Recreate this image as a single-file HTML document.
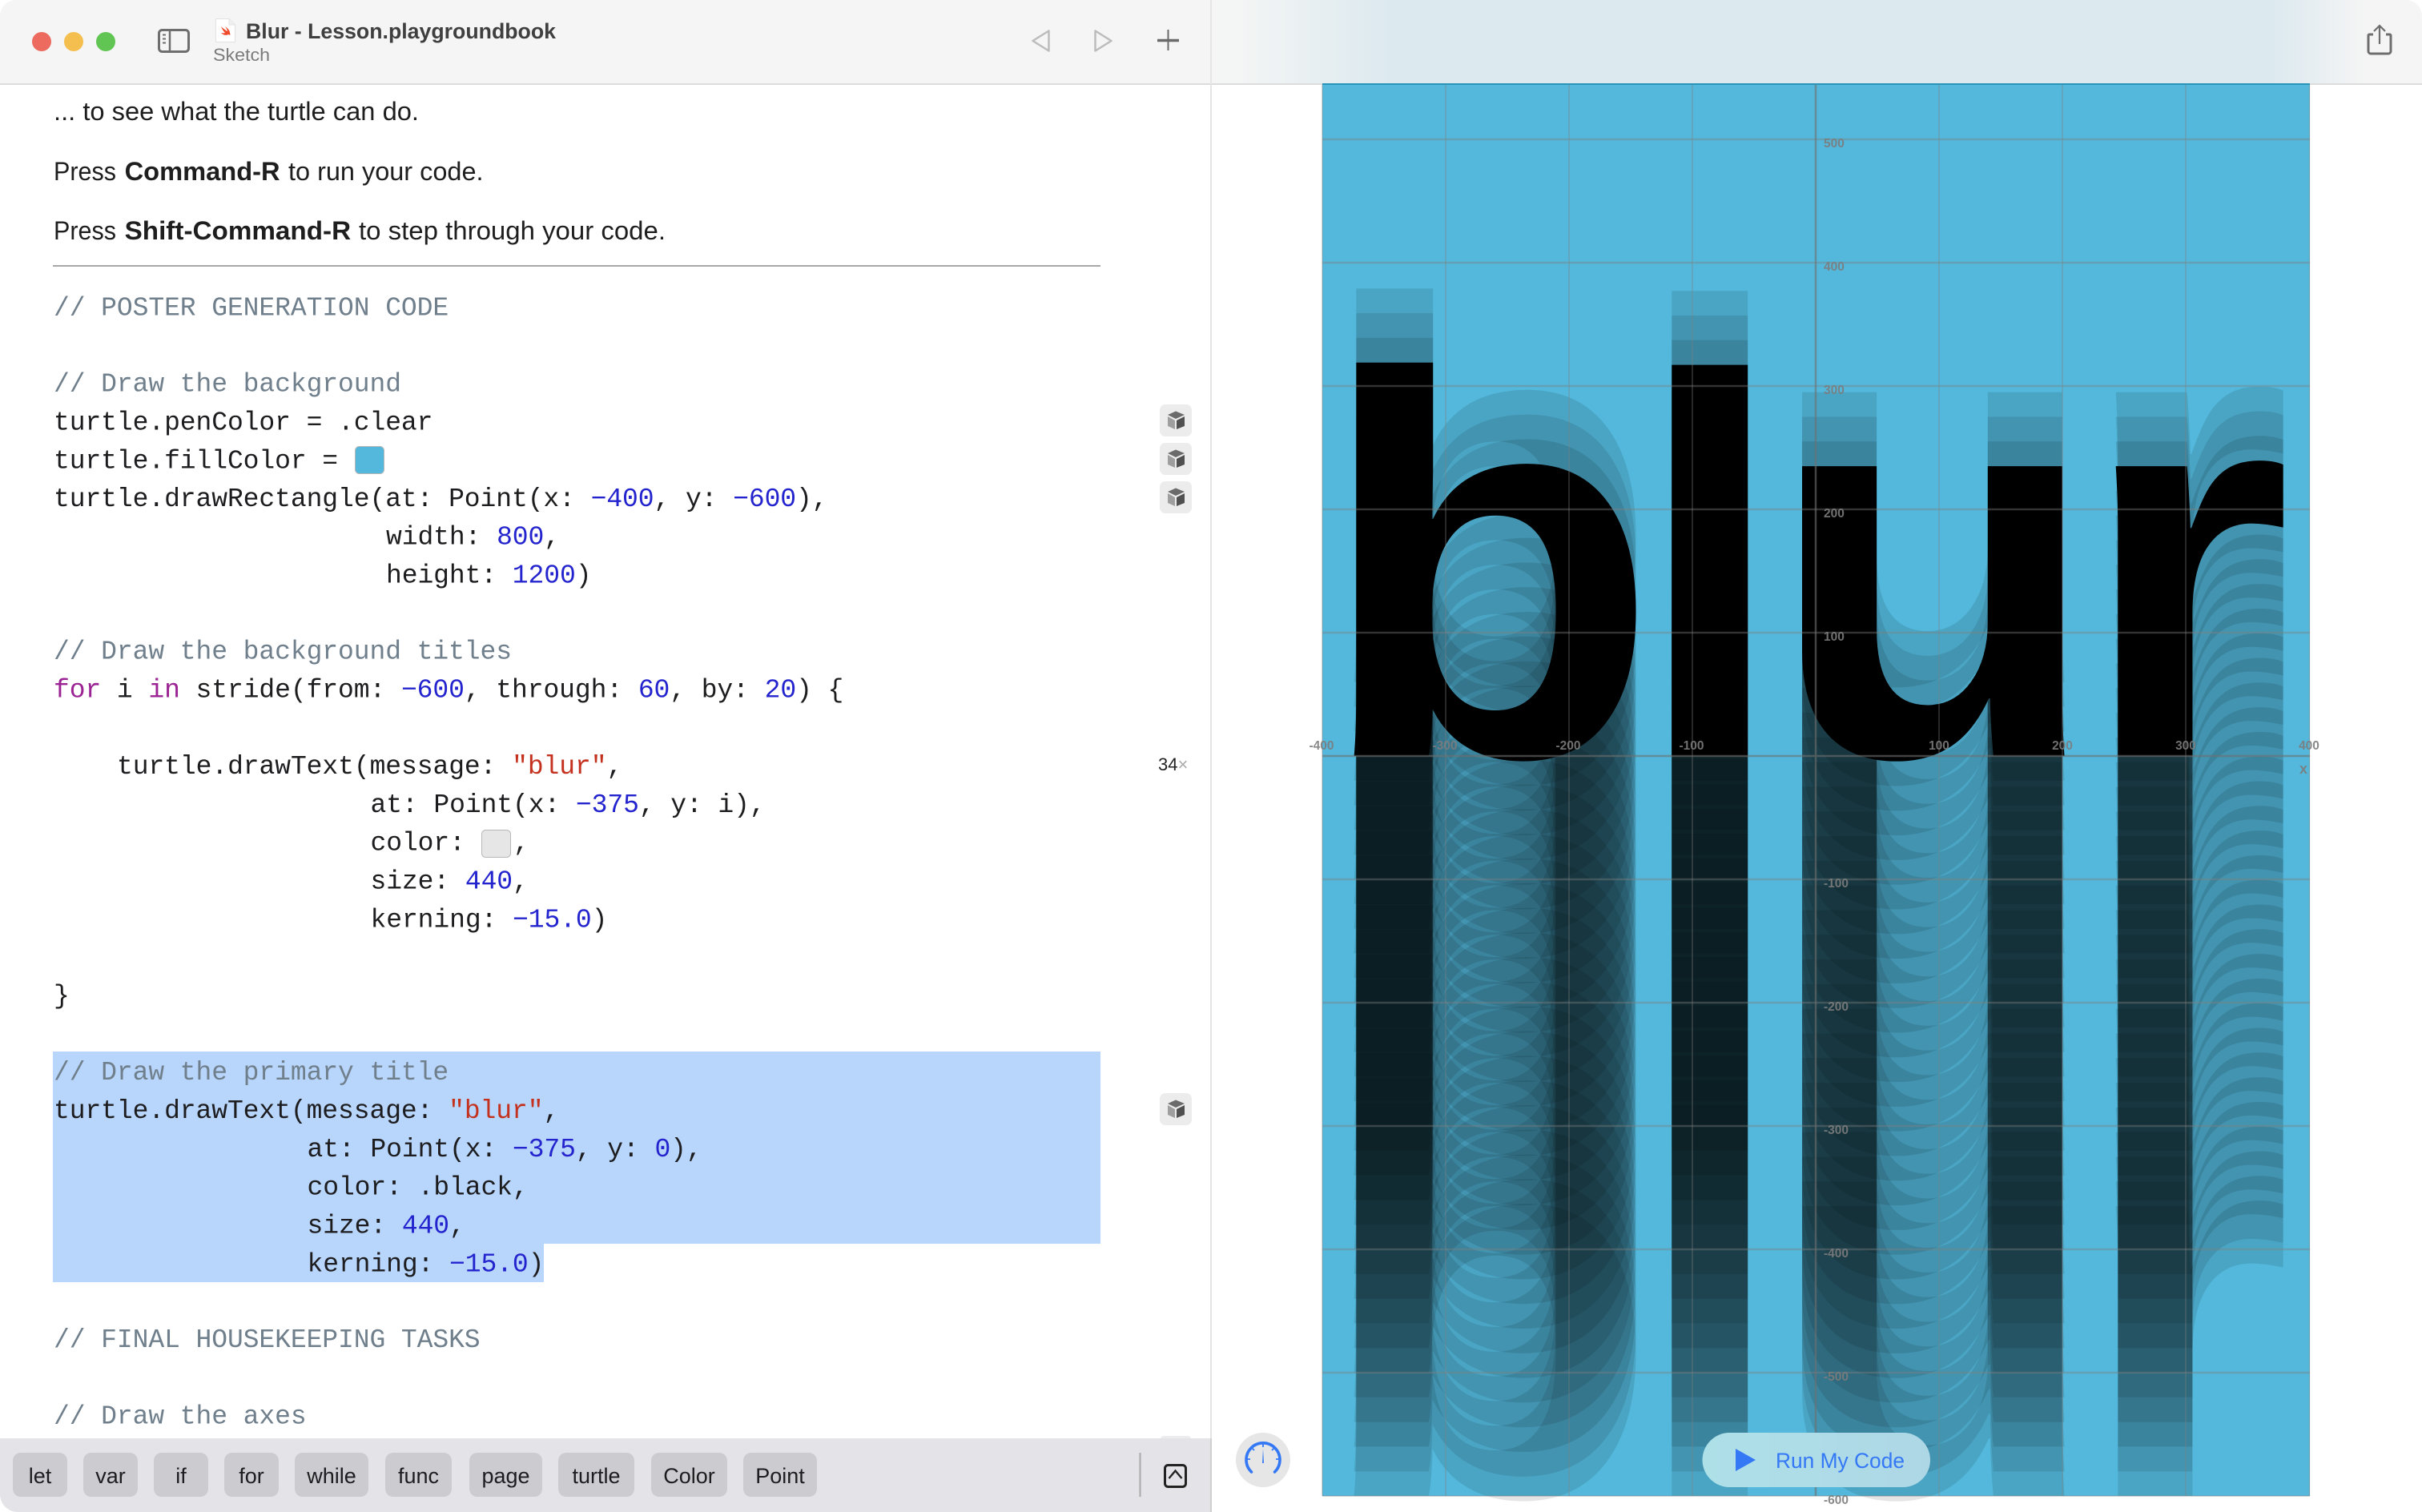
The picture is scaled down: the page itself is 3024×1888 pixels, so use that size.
<!DOCTYPE html>
<html lang="en">
<head>
<meta charset="utf-8">
<title>Blur - Lesson.playgroundbook</title>
<style>
html,body{margin:0;padding:0;background:#fff;width:3024px;height:1888px;overflow:hidden}
svg{display:block}
text{font-family:"Liberation Sans",sans-serif;white-space:pre}
.p{font-size:32px;fill:#1e1e1e}
.pb{font-size:32px;font-weight:700;fill:#1e1e1e}
.c{font-family:"Liberation Mono",monospace;font-size:33px;fill:#1d1d1f;letter-spacing:-.08px}
.cm{fill:#707f8c}
.n{fill:#2424cf}
.s{fill:#c4321f}
.k{fill:#9b2393}
.chip{fill:#cccbd0}
.ct{font-size:27px;fill:#1d1d1f;text-anchor:middle}
.lb text{font-family:"Liberation Sans",sans-serif;font-weight:700;fill:#000;fill-opacity:.1}
.lb text.blk{fill-opacity:1}
.fb{font-size:678px}
.fl{font-size:674px}
.fu{font-size:685px}
.g{stroke:#808080;stroke-opacity:.42;stroke-width:1.500;fill:none}
.gh{stroke:#808080;stroke-opacity:.4;stroke-width:2.500;fill:none}
.ga{stroke:#707070;stroke-opacity:.6;stroke-width:2.500;fill:none}
.l{font-size:15.500px;font-weight:700;fill:#7c7c7c;fill-opacity:.9}
.lm{text-anchor:middle}
</style>
</head>
<body>
<svg xmlns="http://www.w3.org/2000/svg" width="3024" height="1888" viewBox="0 0 3024 1888">
<defs>
<linearGradient id="tb" gradientUnits="userSpaceOnUse" x1="1512" y1="0" x2="3024" y2="0">
<stop offset="0" stop-color="#f5f5f5"/><stop offset=".0225" stop-color="#f4f5f5"/><stop offset=".15" stop-color="#dce9ef"/><stop offset=".875" stop-color="#dce9ef"/><stop offset=".954" stop-color="#f5f5f5"/><stop offset="1" stop-color="#f5f5f5"/>
</linearGradient>
<linearGradient id="rb" x1="0" y1="0" x2="1" y2="0">
<stop offset="0" stop-color="#aee0e8"/><stop offset="1" stop-color="#aed7e6"/>
</linearGradient>
<g id="cube">
<polygon points="1458,518 1468,513.5 1479,518 1468,523" fill="#6b6b6b"/>
<polygon points="1458,520 1467,525 1467,536 1458,532" fill="#9e9e9e"/>
<polygon points="1469,525 1479,520 1479,532 1469,536" fill="#505050"/>
</g>
</defs>

<rect width="3024" height="1888" fill="#fff"/>

<!-- Poster -->
<rect x="1651" y="104" width="1233" height="1764" fill="#53b8db"/>

<g class="lb fb" transform="translate(1644.600,0) scale(1.03,1)">
<text y="851.6">b</text><text y="882.4">b</text><text y="913.2">b</text><text y="944">b</text><text y="974.8">b</text><text y="1005.6">b</text><text y="1036.4">b</text><text y="1067.2">b</text><text y="1098">b</text><text y="1128.8">b</text><text y="1159.6">b</text><text y="1190.4">b</text><text y="1221.2">b</text><text y="1252">b</text><text y="1282.8">b</text><text y="1313.6">b</text><text y="1344.4">b</text><text y="1375.2">b</text><text y="1406">b</text><text y="1436.8">b</text><text y="1467.6">b</text><text y="1498.4">b</text><text y="1529.2">b</text><text y="1560">b</text><text y="1590.8">b</text><text y="1621.6">b</text><text y="1652.4">b</text><text y="1683.2">b</text><text y="1714">b</text><text y="1744.8">b</text><text y="1775.6">b</text><text y="1806.4">b</text><text y="1837.2">b</text><text y="1868">b</text>
<text class="blk" y="944">b</text>
</g>
<g class="lb fl" transform="translate(2039,0) scale(1.026,1)">
<text y="851.6">l</text><text y="882.4">l</text><text y="913.2">l</text><text y="944">l</text><text y="974.8">l</text><text y="1005.6">l</text><text y="1036.4">l</text><text y="1067.2">l</text><text y="1098">l</text><text y="1128.8">l</text><text y="1159.6">l</text><text y="1190.4">l</text><text y="1221.2">l</text><text y="1252">l</text><text y="1282.8">l</text><text y="1313.6">l</text><text y="1344.4">l</text><text y="1375.2">l</text><text y="1406">l</text><text y="1436.8">l</text><text y="1467.6">l</text><text y="1498.4">l</text><text y="1529.2">l</text><text y="1560">l</text><text y="1590.8">l</text><text y="1621.6">l</text><text y="1652.4">l</text><text y="1683.2">l</text><text y="1714">l</text><text y="1744.8">l</text><text y="1775.6">l</text><text y="1806.4">l</text><text y="1837.2">l</text><text y="1868">l</text>
<text class="blk" y="944">l</text>
</g>
<g class="lb fu" transform="translate(2208,0) scale(.99,1)">
<text y="851.6">u</text><text y="882.4">u</text><text y="913.2">u</text><text y="944">u</text><text y="974.8">u</text><text y="1005.6">u</text><text y="1036.4">u</text><text y="1067.2">u</text><text y="1098">u</text><text y="1128.8">u</text><text y="1159.6">u</text><text y="1190.4">u</text><text y="1221.2">u</text><text y="1252">u</text><text y="1282.8">u</text><text y="1313.6">u</text><text y="1344.4">u</text><text y="1375.2">u</text><text y="1406">u</text><text y="1436.8">u</text><text y="1467.6">u</text><text y="1498.4">u</text><text y="1529.2">u</text><text y="1560">u</text><text y="1590.8">u</text><text y="1621.6">u</text><text y="1652.4">u</text><text y="1683.2">u</text><text y="1714">u</text><text y="1744.8">u</text><text y="1775.6">u</text><text y="1806.4">u</text><text y="1837.2">u</text><text y="1868">u</text>
<text class="blk" y="944">u</text>
</g>
<g class="lb fu" transform="translate(2597,0) scale(.99,1)">
<text y="851.6">r</text><text y="882.4">r</text><text y="913.2">r</text><text y="944">r</text><text y="974.8">r</text><text y="1005.6">r</text><text y="1036.4">r</text><text y="1067.2">r</text><text y="1098">r</text><text y="1128.8">r</text><text y="1159.6">r</text><text y="1190.4">r</text><text y="1221.2">r</text><text y="1252">r</text><text y="1282.8">r</text><text y="1313.6">r</text><text y="1344.4">r</text><text y="1375.2">r</text><text y="1406">r</text><text y="1436.8">r</text><text y="1467.6">r</text><text y="1498.4">r</text><text y="1529.2">r</text><text y="1560">r</text><text y="1590.8">r</text><text y="1621.6">r</text><text y="1652.4">r</text><text y="1683.2">r</text><text y="1714">r</text><text y="1744.8">r</text><text y="1775.6">r</text><text y="1806.4">r</text><text y="1837.2">r</text><text y="1868">r</text>
<text class="blk" y="944">r</text>
</g>

<!-- Grid -->
<path class="g" d="M1651 104V1868M1805 104V1868M1959 104V1868M2113 104V1868M2421 104V1868M2575 104V1868M2729 104V1868M2883.500 104V1868"/>
<path class="gh" d="M1651 174H2884M1651 328H2884M1651 482H2884M1651 636H2884M1651 790H2884M1651 1098H2884M1651 1252H2884M1651 1406H2884M1651 1560H2884M1651 1714H2884"/>
<path class="g" d="M1651 1868H2884"/>
<path class="ga" d="M2267 104V1868M1651 944H2884"/>
<rect x="1651" y="103" width="1233" height="3" fill="#2a93b8"/>

<g class="l">
<text x="2277" y="184">500</text><text x="2277" y="338">400</text><text x="2277" y="492">300</text><text x="2277" y="646">200</text><text x="2277" y="800">100</text>
<text x="2277" y="1108">-100</text><text x="2277" y="1262">-200</text><text x="2277" y="1416">-300</text><text x="2277" y="1570">-400</text><text x="2277" y="1724">-500</text><text x="2277" y="1878">-600</text>
<text class="lm" x="1650" y="936">-400</text><text class="lm" x="1804" y="936">-300</text><text class="lm" x="1958" y="936">-200</text><text class="lm" x="2112" y="936">-100</text>
<text class="lm" x="2421" y="936">100</text><text class="lm" x="2575" y="936">200</text><text class="lm" x="2729" y="936">300</text><text class="lm" x="2883" y="936">400</text>
<text x="2871" y="966" style="font-size:18px">x</text>
</g>

<!-- Titlebar -->
<path d="M0 104V20A20 20 0 0 1 20 0H3004A20 20 0 0 1 3024 20V104Z" fill="#f5f5f5"/>
<rect x="1513" y="0" width="1491" height="104" fill="url(#tb)"/>
<rect x="0" y="104" width="1651" height="2" fill="#dcdcdc"/>
<rect x="2884" y="104" width="140" height="2" fill="#dcdcdc"/>
<rect x="1511" y="0" width="2" height="1888" fill="#e4e4e4"/>

<circle cx="52" cy="52" r="12" fill="#ec6a5e"/>
<circle cx="92" cy="52" r="12" fill="#f4bf4f"/>
<circle cx="132" cy="52" r="12" fill="#61c554"/>

<rect x="198.500" y="37.500" width="37" height="27" rx="4" fill="none" stroke="#6e6e6e" stroke-width="3"/>
<path d="M212 37V65" stroke="#6e6e6e" stroke-width="2.500"/>
<path d="M203 43.500H207M203 48.500H207M203 53.500H207" stroke="#6e6e6e" stroke-width="2"/>

<path d="M269.500 23.500H286L293.500 31V52.500H269.500Z" fill="#fff" stroke="#e2e2e2"/>
<path d="M286 23.500V31H293.500" fill="#f0f0f0" stroke="#e2e2e2"/>
<path d="M276 33C279 36 282 38 284 39C283 35 281 33 281 33C284 35 287 38 287 41C288 43 287 44 287 44C286 43 285 43 284 43.500C281 44.500 278 43 276 41C278 41.500 280 41.500 281 41C279 39 277 36 276 33Z" fill="#ee4a2b"/>

<text x="307" y="48" style="font-size:27px;font-weight:700;fill:#3f3f3f" textLength="387" lengthAdjust="spacingAndGlyphs">Blur - Lesson.playgroundbook</text>
<text x="266" y="76" style="font-size:22px;fill:#7b7b7b" textLength="71" lengthAdjust="spacingAndGlyphs">Sketch</text>

<path d="M1309.500 38.500V63.500L1289.500 51Z" fill="none" stroke="#bcbcbc" stroke-width="2.500" stroke-linejoin="round"/>
<path d="M1367.500 38.500V63.500L1387.500 51Z" fill="none" stroke="#bcbcbc" stroke-width="2.500" stroke-linejoin="round"/>
<path d="M1445 50.500H1472" stroke="#6a6a6a" stroke-width="3.500"/>
<path d="M1458.500 37V63" stroke="#6a6a6a" stroke-width="2"/>

<path d="M2963 43H2958A1.500 1.500 0 0 0 2957 44.500V64A3 3 0 0 0 2960 67H2982A3 3 0 0 0 2985 64V44.500A1.500 1.500 0 0 0 2984 43H2979" fill="none" stroke="#6e6e6e" stroke-width="3"/>
<path d="M2971 32V55M2964 39L2971 32L2978 39" fill="none" stroke="#6e6e6e" stroke-width="2.200"/>

<!-- Prose -->
<text class="p" x="67" y="150" textLength="456" lengthAdjust="spacingAndGlyphs">... to see what the turtle can do.</text>
<text class="p" x="67" y="225" textLength="78" lengthAdjust="spacingAndGlyphs">Press</text>
<text class="pb" x="155.600" y="225" textLength="194" lengthAdjust="spacingAndGlyphs">Command-R</text>
<text class="p" x="360" y="225" textLength="243.500" lengthAdjust="spacingAndGlyphs">to run your code.</text>
<text class="p" x="67" y="299" textLength="78" lengthAdjust="spacingAndGlyphs">Press</text>
<text class="pb" x="155.600" y="299" textLength="282.500" lengthAdjust="spacingAndGlyphs">Shift-Command-R</text>
<text class="p" x="448" y="299" textLength="383" lengthAdjust="spacingAndGlyphs">to step through your code.</text>
<rect x="66" y="331" width="1308" height="2" fill="#a8a8a8"/>

<!-- Selection -->
<rect x="66" y="1313" width="1308" height="240" fill="#b8d5fb"/>
<rect x="66" y="1553" width="613" height="48" fill="#b8d5fb"/>

<!-- Code -->
<text class="c cm" x="67" y="393.500">// POSTER GENERATION CODE</text>
<text class="c cm" x="67" y="488.500">// Draw the background</text>
<text class="c" x="67" y="536.250">turtle.penColor = .clear</text>
<text class="c" x="67" y="584.500">turtle.fillColor = </text>
<rect x="443.500" y="557.500" width="36" height="34" rx="5" fill="#53b8db" stroke="#b8b8b8"/>
<text class="c" x="67" y="631.750">turtle.drawRectangle(at: Point(x: <tspan class="n">−400</tspan>, y: <tspan class="n">−600</tspan>),</text>
<text class="c" x="482" y="679.500">width: <tspan class="n">800</tspan>,</text>
<text class="c" x="482" y="727.250">height: <tspan class="n">1200</tspan>)</text>
<text class="c cm" x="67" y="822.500">// Draw the background titles</text>
<text class="c" x="67" y="870.500"><tspan class="k">for</tspan> i <tspan class="k">in</tspan> stride(from: <tspan class="n">−600</tspan>, through: <tspan class="n">60</tspan>, by: <tspan class="n">20</tspan>) {</text>
<text class="c" x="146" y="966">turtle.drawText(message: <tspan class="s">"blur"</tspan>,</text>
<text class="c" x="462.500" y="1013.750">at: Point(x: <tspan class="n">−375</tspan>, y: i),</text>
<text class="c" x="462.500" y="1061.500">color: </text>
<rect x="601.500" y="1036.500" width="36" height="34" rx="5" fill="#e6e6e6" stroke="#b8b8b8"/>
<text class="c" x="641" y="1061.500">,</text>
<text class="c" x="462.500" y="1109.250">size: <tspan class="n">440</tspan>,</text>
<text class="c" x="462.500" y="1157.500">kerning: <tspan class="n">−15.0</tspan>)</text>
<text class="c" x="67" y="1252.500">}</text>
<text class="c cm" x="67" y="1348">// Draw the primary title</text>
<text class="c" x="67" y="1396">turtle.drawText(message: <tspan class="s">"blur"</tspan>,</text>
<text class="c" x="383.500" y="1444">at: Point(x: <tspan class="n">−375</tspan>, y: <tspan class="n">0</tspan>),</text>
<text class="c" x="383.500" y="1491.500">color: .black,</text>
<text class="c" x="383.500" y="1539.500">size: <tspan class="n">440</tspan>,</text>
<text class="c" x="383.500" y="1587.500">kerning: <tspan class="n">−15.0</tspan>)</text>
<text class="c cm" x="67" y="1682">// FINAL HOUSEKEEPING TASKS</text>
<text class="c cm" x="67" y="1777.500">// Draw the axes</text>

<!-- Gutter -->
<rect x="1448" y="505" width="40" height="40" rx="7" fill="#ececec"/>
<rect x="1448" y="553" width="40" height="40" rx="7" fill="#ececec"/>
<rect x="1448" y="601" width="40" height="40" rx="7" fill="#ececec"/>
<rect x="1448" y="1365" width="40" height="40" rx="7" fill="#ececec"/>
<use href="#cube"/>
<use href="#cube" y="48"/>
<use href="#cube" y="96"/>
<use href="#cube" y="860"/>
<text x="1446" y="962" style="font-size:22px;fill:#222">34<tspan style="fill:#aaa">×</tspan></text>

<!-- Bottom bar -->
<rect x="1449" y="1793" width="38" height="10" rx="4" fill="#ececec"/>
<path d="M0 1796H1511V1888H22A22 22 0 0 1 0 1866Z" fill="#e3e3e8"/>
<rect x="1511" y="1796" width="2" height="92" fill="#cfcfcf"/>
<rect class="chip" x="16" y="1814" width="68" height="55" rx="10"/><text class="ct" x="50" y="1852">let</text>
<rect class="chip" x="104" y="1814" width="68" height="55" rx="10"/><text class="ct" x="138" y="1852">var</text>
<rect class="chip" x="192" y="1814" width="68" height="55" rx="10"/><text class="ct" x="226" y="1852">if</text>
<rect class="chip" x="280" y="1814" width="68" height="55" rx="10"/><text class="ct" x="314" y="1852">for</text>
<rect class="chip" x="368" y="1814" width="92" height="55" rx="10"/><text class="ct" x="414" y="1852">while</text>
<rect class="chip" x="481" y="1814" width="83" height="55" rx="10"/><text class="ct" x="522.500" y="1852">func</text>
<rect class="chip" x="586" y="1814" width="91" height="55" rx="10"/><text class="ct" x="631.500" y="1852">page</text>
<rect class="chip" x="697" y="1814" width="95" height="55" rx="10"/><text class="ct" x="744.500" y="1852">turtle</text>
<rect class="chip" x="813" y="1814" width="95" height="55" rx="10"/><text class="ct" x="860.500" y="1852">Color</text>
<rect class="chip" x="928" y="1814" width="92" height="55" rx="10"/><text class="ct" x="974" y="1852">Point</text>
<rect x="1422.500" y="1814" width="2" height="55" fill="#a9a9a9"/>
<rect x="1454.500" y="1829.500" width="26" height="27" rx="4" fill="none" stroke="#222" stroke-width="3"/>
<path d="M1459.500 1846L1467.500 1836.500L1475.500 1846" fill="none" stroke="#222" stroke-width="2.400"/>

<!-- Gauge -->
<circle cx="1577" cy="1823" r="34" fill="#e6e6e6"/>
<path d="M1562.500 1838A21 21 0 1 1 1591.500 1838" fill="none" stroke="#3478f6" stroke-width="3.600" stroke-linecap="round"/>
<path d="M1577 1802V1807M1557 1822H1561M1597 1822H1593M1563 1808L1566 1811M1591 1808L1588 1811" stroke="#3478f6" stroke-width="1.800"/>
<polygon points="1576,1827 1577,1809 1578,1827" fill="#3478f6"/>

<!-- Run button -->
<rect x="2125.500" y="1789" width="284.500" height="68" rx="34" fill="url(#rb)"/>
<polygon points="2167,1809 2192,1823 2167,1837" fill="#3478f6"/>
<text x="2217" y="1833" style="font-size:27px;fill:#3478f6" textLength="161" lengthAdjust="spacingAndGlyphs">Run My Code</text>
</svg>
</body>
</html>
